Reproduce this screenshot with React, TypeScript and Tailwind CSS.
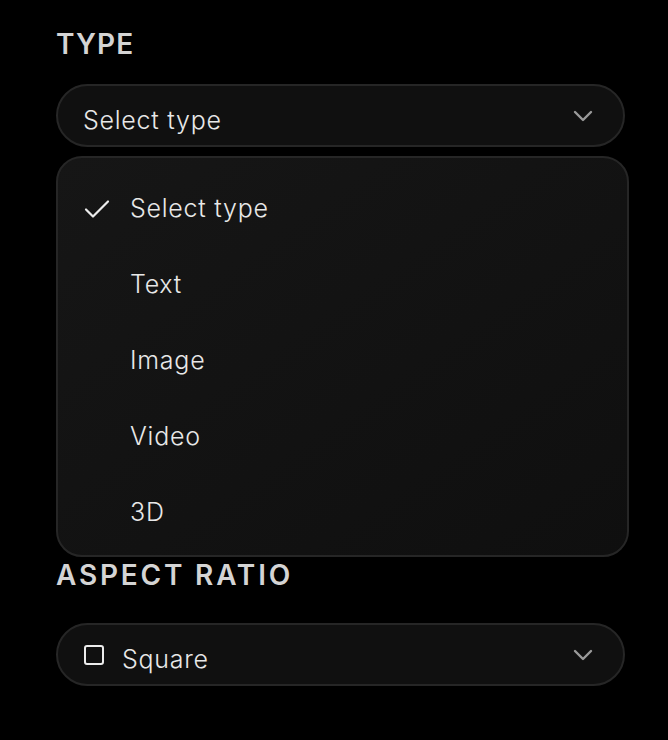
import React from "react";

function Chevron() {
  return (
    <svg width="20" height="12" viewBox="0 0 20 12" fill="none" className="text-[#9a9a9a]">
      <path d="M2 2 L10 10 L18 2" stroke="currentColor" strokeWidth="2.4" strokeLinecap="round" strokeLinejoin="round" />
    </svg>
  );
}

function Check() {
  return (
    <svg width="26" height="20" viewBox="0 0 26 20" fill="none" className="text-[#ececec]">
      <path d="M2 10.5 L9 17.5 L24 2.5" stroke="currentColor" strokeWidth="2.2" strokeLinecap="round" strokeLinejoin="round" />
    </svg>
  );
}

function SquareIcon() {
  return (
    <svg width="20" height="20" viewBox="0 0 20 20" fill="none" className="text-[#ececec]">
      <rect x="1" y="1" width="18" height="18" rx="2" stroke="currentColor" strokeWidth="2" />
    </svg>
  );
}

const items = ["Select type", "Text", "Image", "Video", "3D"];

export default function App() {
  return (
    <div className="min-h-[740px] w-full bg-black" style={{ fontFamily: "Inter, 'Noto Sans', sans-serif" }}>
      <div className="relative pl-[56px] pr-[43px] pt-[27px]">
        <div className="text-[28px] font-semibold leading-[34px] tracking-[0.04em] text-[#d4d4d4]">TYPE</div>
        <div className="relative mt-[23px]">
          <div className="flex h-[63px] items-center justify-between rounded-full border-2 border-[#262626] bg-[#101010] pl-[25px] pr-[30px]">
            <span className="pt-[10px] text-[25px] font-light tracking-[0.03em] text-[#e8e8e8]">Select type</span>
            <Chevron />
          </div>
          <div className="absolute left-0 right-[-4px] top-[72px] z-10 flex flex-col rounded-[26px] border-2 border-[#262626] bg-gradient-to-br from-[#161616] to-[#0f0f0f] pb-[4px] pt-[13px]">
            {items.map((it, i) => (
              <div key={it} className="flex h-[76px] items-center">
                <div className="flex w-[72px] justify-end pr-[20px]">{i === 0 ? <Check /> : null}</div>
                <span className="text-[25px] font-light tracking-[0.03em] text-[#e8e8e8]">{it}</span>
              </div>
            ))}
          </div>
        </div>
        <div className="mt-[411px] text-[28px] font-semibold leading-[34px] tracking-[0.1em] text-[#d4d4d4]">ASPECT RATIO</div>
        <div className="mt-[31px] flex h-[63px] items-center justify-between rounded-full border-2 border-[#262626] bg-[#101010] pl-[26px] pr-[30px]">
          <div className="flex items-center gap-[18px]">
            <SquareIcon />
            <span className="pt-[10px] text-[25px] font-light tracking-[0.03em] text-[#e8e8e8]">Square</span>
          </div>
          <Chevron />
        </div>
      </div>
    </div>
  );
}
